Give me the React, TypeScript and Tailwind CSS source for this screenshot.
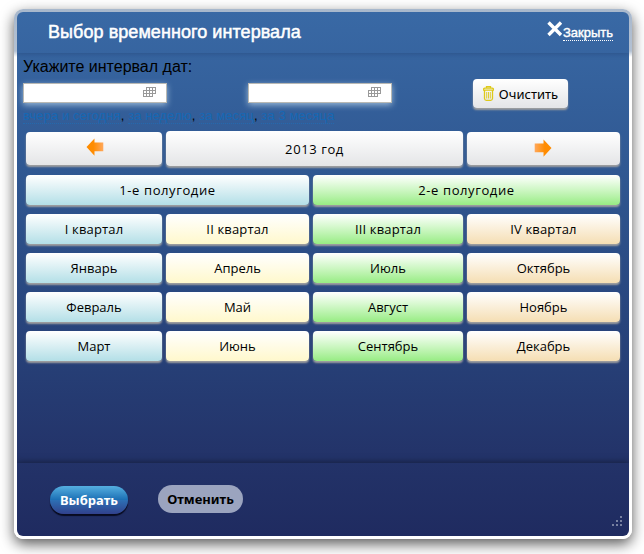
import type { ReactNode } from "react";

type Tone = "plain" | "blue" | "yellow" | "green" | "orange";

const tones: Record<Tone, string> = {
  plain: "from-white to-[#e4e5e7]",
  blue: "from-white to-[#b3dfe7]",
  yellow: "from-white to-[#fff8cc]",
  green: "from-white to-[#97ec83]",
  orange: "from-white to-[#f5deb3]",
};

function Key({ tone, className = "", children }: { tone: Tone; className?: string; children: ReactNode }) {
  return (
    <button
      className={`flex items-center justify-center rounded-[4px] bg-linear-to-b text-[13px] leading-[16px] text-black shadow-[0_2px_2px_#a0a0a0] ${tones[tone]} ${className}`}
    >
      {children}
    </button>
  );
}

function Arrow({ flip = false }: { flip?: boolean }) {
  return (
    <svg width="18" height="18" viewBox="0 0 18 18" className={flip ? "-translate-x-px -translate-y-px -scale-x-100" : "-translate-y-[2px] translate-x-px"}>
      <defs>
        <linearGradient id={flip ? "arrowR" : "arrowL"} x1="0" x2="1">
          <stop offset="0.4" stopColor="#ff8c00" />
          <stop offset="1" stopColor="#ffa85c" />
        </linearGradient>
      </defs>
      <path d="M0.5 9 L8.5 0.5 V4.5 H17.3 V13.2 H8.5 V17.8 Z" fill={`url(#${flip ? "arrowR" : "arrowL"})`} />
    </svg>
  );
}

function DateField() {
  return (
    <div className="flex h-[20px] w-[144px] items-start justify-end border border-[#b9b9b4] bg-white pt-[3px] pr-[10px] shadow-[0_2px_6px_rgba(190,215,235,0.75)]">
      <svg width="13" height="10" viewBox="0 0 13 10" fill="none" stroke="#999" strokeWidth="1" shapeRendering="crispEdges">
        <path d="M3 .5H13M0 3.5H13M0 6.5H13M0 9.5H10M.5 3V10M3.5 0V10M6.5 0V10M9.5 0V10M12.5 0V7" />
      </svg>
    </div>
  );
}

const months: [string, Tone][][] = [
  [["I квартал", "blue"], ["II квартал", "yellow"], ["III квартал", "green"], ["IV квартал", "orange"]],
  [["Январь", "blue"], ["Апрель", "yellow"], ["Июль", "green"], ["Октябрь", "orange"]],
  [["Февраль", "blue"], ["Май", "yellow"], ["Август", "green"], ["Ноябрь", "orange"]],
  [["Март", "blue"], ["Июнь", "yellow"], ["Сентябрь", "green"], ["Декабрь", "orange"]],
];

const ranges = ["вчера и сегодня", "за неделю", "за месяц", "за 3 месяца"];

export default function App() {
  return (
    <div className="h-[554px] w-[644px] overflow-hidden bg-white pt-[9px] pl-[14px] font-['Liberation_Sans',sans-serif]">
      <div className="h-[530px] w-[618px] rounded-[9px] bg-[linear-gradient(#a8b8cc_0,#b3c1d3_42px,#fff_48px)] p-[3px] shadow-[0_5px_14px_rgba(0,0,0,0.65)]">
        <div className="flex h-[524px] w-[612px] flex-col overflow-hidden rounded-[6px] bg-[linear-gradient(#3969a5_0%,#305892_30%,#28457d_58%,#233369_85%,#1f2b60_100%)]">
          <header className="flex h-[41px] shrink-0 items-start justify-between pr-[16px] pl-[31px] text-white shadow-[0_1px_5px_rgba(10,30,70,0.25)]">
            <h1 className="pt-[10px] text-[18px] leading-[20px] font-normal tracking-[0.06px] whitespace-nowrap [-webkit-text-stroke:0.5px_white]">
              Выбор временного интервала
            </h1>
            <div className="flex pt-[9px]">
              <svg width="16" height="16" viewBox="0 0 16 16" className="shrink-0" stroke="#fff" strokeWidth="3.4">
                <path d="M1.5 1.5 14 14M14 1.5 1.5 14" />
              </svg>
              <a className="mt-[4px] h-[16px] border-b border-dotted border-white text-[13px] leading-[15px] whitespace-nowrap [-webkit-text-stroke:0.4px_white]">
                Закрыть
              </a>
            </div>
          </header>

          <main className="flex h-[410px] shrink-0 flex-col pl-[6px]">
            <p className="mt-[4px] h-[20px] text-[16px] leading-[20px] whitespace-nowrap text-black">Укажите интервал дат:</p>
            <div className="mt-[2px] flex h-[30px]">
              <div className="mt-[4px] mr-[81px]"><DateField /></div>
              <div className="mt-[4px] mr-[81px]"><DateField /></div>
              <Key tone="plain" className="h-[29px] w-[95px] gap-[5px] font-['Noto_Sans',sans-serif]">
                <svg width="11" height="15" viewBox="0 0 11 15" fill="none" stroke="#dec91a">
                  <path d="M3.5 2V.7H7.5V2M.5 4.2V3Q1 2.2 2 2.1H9Q10 2.2 10.5 3V4.2ZM1.5 4.5V12.5Q1.7 14.3 3.3 14.3H7.7Q9.3 14.3 9.5 12.5V4.5" strokeWidth="1.3" />
                  <path d="M3.7 6V12.5M5.5 6V12.5M7.3 6V12.5" strokeWidth="0.9" />
                </svg>
                <span>Очистить</span>
              </Key>
            </div>
            <p className="h-[14px] text-[13px] leading-[13px] tracking-[0.1px] whitespace-nowrap text-black">
              {ranges.map((label, i) => (
                <span key={label}>
                  {i > 0 && ", "}
                  <a className="border-b border-dotted border-[#2469ae] text-[#1668b4]">{label}</a>
                </span>
              ))}
            </p>

            <div className="mt-[8px] ml-[3px] grid w-[594px] grid-cols-[136px_143px_150px_153px] gap-x-[4px] font-['Open_Sans',sans-serif]">
              <Key tone="plain" className="mt-px h-[33px]"><Arrow /></Key>
              <Key tone="plain" className="col-span-2 h-[35px] tracking-[0.6px]">2013 год</Key>
              <Key tone="plain" className="mt-px h-[33px]"><Arrow flip /></Key>
              <Key tone="blue" className="col-span-2 mt-[9px] h-[30px] tracking-[0.6px]">1-е полугодие</Key>
              <Key tone="green" className="col-span-2 mt-[9px] h-[30px] tracking-[0.6px]">2-е полугодие</Key>
              {months.flat().map(([label, tone]) => (
                <Key key={label} tone={tone} className={`mt-[9px] h-[30px] ${label.includes("квартал") ? "tracking-[0.15px]" : ""}`}>{label}</Key>
              ))}
            </div>
          </main>

          <footer className="flex h-[73px] grow items-start pl-[33px] font-['Noto_Sans',sans-serif] text-[13px] font-bold shadow-[0_-1px_6px_rgba(20,30,60,0.9)]">
            <button className="mt-[23px] h-[28px] w-[78px] rounded-full bg-[linear-gradient(#55afe0_0%,#1c70b5_49%,#2d6fb4_51%,#31418c_100%)] leading-[27px] text-white shadow-[0_2px_1px_#080b20]">
              Выбрать
            </button>
            <button className="mt-[22px] ml-[30px] h-[28px] w-[85px] rounded-full bg-[#9ba4bf] leading-[27px] text-black">
              Отменить
            </button>
            <svg width="10" height="10" viewBox="0 0 10 10" className="mt-[53px] ml-[369px]" fill="#7881a1" shapeRendering="crispEdges">
              <path d="M8 0h2v2H8zM4 4h2v2H4zM8 4h2v2H8zM0 8h2v2H0zM4 8h2v2H4zM8 8h2v2H8z" />
            </svg>
          </footer>
        </div>
      </div>
    </div>
  );
}
